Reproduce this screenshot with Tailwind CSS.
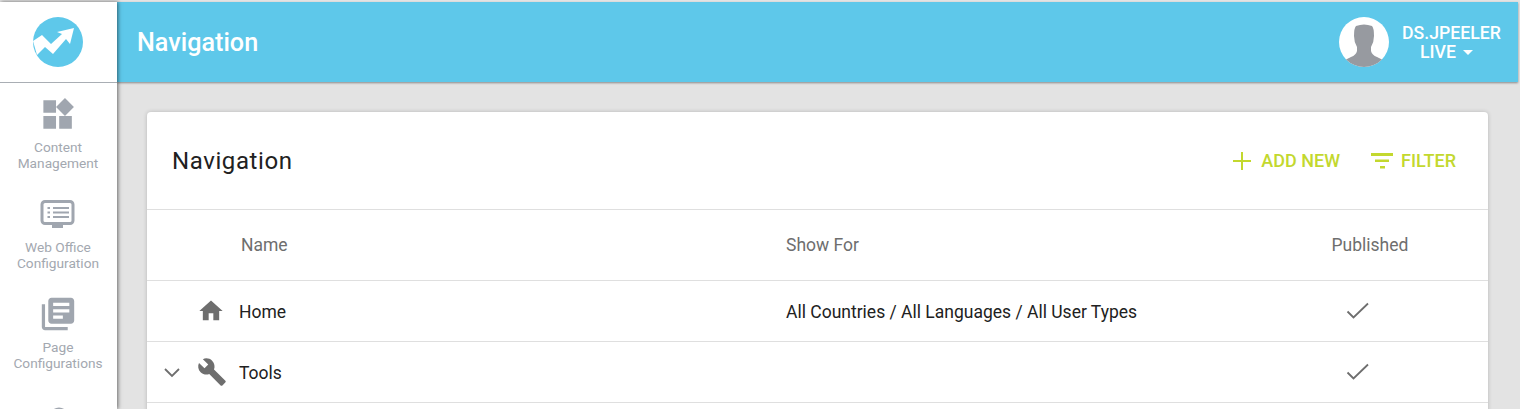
<!DOCTYPE html>
<html lang="en">

<head>
  <meta charset="UTF-8">
  <meta name="viewport" content="width=device-width, initial-scale=1.0">
  <title>Navigation</title>
  <script src="https://cdn.jsdelivr.net/npm/@tailwindcss/browser@4"></script>
</head>

<body class="bg-[#e3e3e3] h-screen overflow-hidden font-['Roboto',sans-serif]">
  <div class="flex h-[409px] pt-[2px] pr-[2px]">

    <!-- Sidebar -->
    <aside class="w-[117px] shrink-0 bg-white shadow-[1px_0_4px_rgba(0,0,0,0.55)] relative z-10 text-[#a3a8b0] text-[13.7px] leading-[16px] text-center overflow-hidden">
      <div class="h-[80px] border-b border-[#a9aeb4] flex items-center justify-center box-content">
        <svg class="w-[50px] h-[50px] -ml-[1px]" viewBox="0 0 50 50">
          <circle cx="25" cy="25" r="25" fill="#5ec8ea" />
          <path d="M0 24 L9 18 L18 27 L29 17 L24 15 L41 11 L37 27 L33 22 L20 37 L12 30 L4 38 Z" fill="#fff" />
        </svg>
      </div>
      <div class="h-[100px] pt-[14px] pr-[1px] flex flex-col items-center">
        <svg class="w-[34px] h-[34px] mb-[8px]" viewBox="1.5 1 21.5 21.5" fill="#a0a6af"><path d="M13 13v8h8v-8h-8zM3 21h8v-8H3v8zM3 3v8h8V3H3zm13.66-1.31L11 7.34 16.66 13l5.66-5.66-5.66-5.65z" /></svg>
        <span>Content<br>Management</span>
      </div>
      <div class="h-[100px] pt-[14px] pr-[1px] flex flex-col items-center">
        <svg class="w-[36px] h-[36px] mb-[6px]" viewBox="0 0 36 36" fill="none">
          <rect x="2" y="4.5" width="31" height="22" rx="3" stroke="#a0a6af" stroke-width="3" />
          <path d="M7.5 11h2.5M13 11h16M7.5 15.5h2.5M13 15.5h16M7.5 20h2.5M13 20h16" stroke="#a0a6af" stroke-width="2" />
          <path d="M12 28h11v3H12z" fill="#a0a6af" />
        </svg>
        <span>Web Office<br>Configuration</span>
      </div>
      <div class="h-[100px] pt-[14px] pr-[1px] flex flex-col items-center">
        <svg class="w-[34px] h-[34px] mb-[8px]" viewBox="1.5 1.5 21 21" fill="#a0a6af"><path d="M4 6H2v14c0 1.1.9 2 2 2h14v-2H4V6zm16-4H8c-1.1 0-2 .9-2 2v12c0 1.1.9 2 2 2h12c1.1 0 2-.9 2-2V4c0-1.1-.9-2-2-2zm-1 9H9V9h10v2zm-4 4H9v-2h6v2zm4-8H9V5h10v2z" /></svg>
        <span>Page<br>Configurations</span>
      </div>
      <div class="pt-[14px] flex justify-center">
        <svg class="w-[36px] h-[36px]" viewBox="0 0 36 36" fill="none"><circle cx="18" cy="20" r="8" stroke="#a0a6af" stroke-width="3" /></svg>
      </div>
    </aside>

    <!-- Main -->
    <div class="flex-1 min-w-0 flex flex-col">
      <header class="h-[80px] shrink-0 bg-[#5ec8ea] shadow-[0_1px_2px_rgba(0,0,0,0.4)] flex items-center justify-between pl-[20px] pr-[17px] text-white">
        <h1 class="text-[25.2px] font-medium mt-[2px]">Navigation</h1>
        <div class="flex items-center gap-[13px]">
          <div class="w-[50px] h-[50px] rounded-full bg-white overflow-hidden -ml-[1px]">
            <svg viewBox="0 0 50 50" class="w-full h-full" fill="#979aa0">
              <path d="M17 9 Q25 6 33 9 Q35 11 35 19 Q35 25 32 30 L32 34 Q33 38 38 40 L44 43 L50 50 L0 50 L6 43 L12 40 Q17 38 18 34 L18 30 Q15 25 15 19 Q15 11 17 9 Z" />
            </svg>
          </div>
          <div class="text-[17.7px] leading-[19px] font-medium text-center mt-[1px]">
            <div>DS.JPEELER</div>
            <div class="flex items-center justify-center gap-[7px] pr-[10px]">LIVE<span class="w-0 h-0 border-x-[5px] border-x-transparent border-t-[5px] border-t-white"></span></div>
          </div>
        </div>
      </header>

      <div class="flex-1 min-h-0 pt-[30px] px-[30px] overflow-hidden">
        <section class="bg-white rounded-t-[4px] shadow-[0_0_4px_rgba(0,0,0,0.2)] h-[400px]">
          <div class="h-[98px] flex items-center justify-between pl-[25px] pr-[32px] border-b border-[#dfdfdf]">
            <h2 class="text-[24px] text-[#212121] tracking-[0.6px]">Navigation</h2>
            <div class="flex items-center gap-[31px] text-[#c3d82e] text-[18px] font-medium">
              <button class="flex items-center gap-[10px]">
                <svg class="w-[18px] h-[18px]" viewBox="0 0 18 18" fill="#c3d82e"><path d="M8 0h2v8h8v2h-8v8H8v-8H0V8h8z" /></svg>
                ADD NEW
              </button>
              <button class="flex items-center gap-[8px]">
                <svg class="w-[22px] h-[16px]" viewBox="0 0 22 16" fill="#c3d82e"><path d="M0 0h22v3H0zM4 6.5h14V9H4zM9 13h5v2.5H9z" /></svg>
                FILTER
              </button>
            </div>
          </div>

          <!-- Column headers -->
          <div class="h-[71px] grid grid-cols-[639px_1fr_236px] items-center border-b border-[#dfdfdf] text-[17.5px] text-[#6e6e6e]">
            <span class="pl-[94px] mt-[1px]">Name</span>
            <span class="mt-[1px]">Show For</span>
            <span class="text-center mt-[1px]">Published</span>
          </div>

          <!-- Rows -->
          <div class="h-[61px] grid grid-cols-[639px_1fr_236px] items-center border-b border-[#dfdfdf] text-[17.5px] text-[#212121]">
            <div class="flex items-center pl-[50px] gap-[14px]">
              <svg class="w-[28px] h-[28px]" viewBox="0 0 24 24" fill="#6e6e6e"><path d="M10 20v-6h4v6h5v-8h3L12 3 2 12h3v8z" /></svg>
              <span class="mt-[2px]">Home</span>
            </div>
            <span class="mt-[2px]">All Countries / All Languages / All User Types</span>
            <svg class="w-[24px] h-[24px] ml-[94px]" viewBox="0 0 24 24" fill="none" stroke="#6e6e6e" stroke-width="1.8"><path d="M1.5 12.5l6 6L22 4.5" /></svg>
          </div>
          <div class="h-[61px] grid grid-cols-[639px_1fr_236px] items-center border-b border-[#dfdfdf] text-[17.5px] text-[#212121]">
            <div class="flex items-center pl-[16px] gap-0">
              <svg class="w-[18px] h-[18px]" viewBox="0 0 18 18" fill="none" stroke="#6e6e6e" stroke-width="1.8"><path d="M2 6l7 7 7-7" /></svg>
              <svg class="w-[30px] h-[30px] ml-[16px] mr-[12px]" viewBox="0 0 24 24" fill="#6e6e6e"><path d="M22.7 19l-9.1-9.1c.9-2.3.4-5-1.5-6.9-2-2-5-2.4-7.4-1.3L9 6 6 9 1.6 4.7C.4 7.1.9 10.1 2.9 12.1c1.9 1.9 4.6 2.4 6.9 1.5l9.1 9.1c.4.4 1 .4 1.4 0l2.3-2.3c.5-.4.5-1.1.1-1.4z" /></svg>
              <span class="mt-[2px]">Tools</span>
            </div>
            <span></span>
            <svg class="w-[24px] h-[24px] ml-[94px]" viewBox="0 0 24 24" fill="none" stroke="#6e6e6e" stroke-width="1.8"><path d="M1.5 12.5l6 6L22 4.5" /></svg>
          </div>
        </section>
      </div>
    </div>
  </div>
</body>

</html>
